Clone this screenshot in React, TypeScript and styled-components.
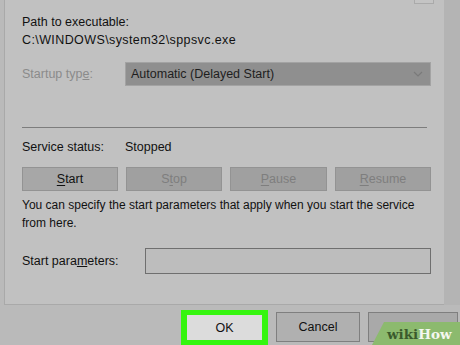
import React from "react";
import styled, { createGlobalStyle } from "styled-components";

const GlobalStyle = createGlobalStyle`
    html, body {
        margin: 0;
        padding: 0;
        background: #bcbcbc;
    }
    body {
        font-family: "Liberation Sans", Arial, sans-serif;
        font-size: 12.5px;
        color: #111;
    }
`;

const Page = styled.div`
    position: relative;
    width: 460px;
    height: 345px;
    overflow: hidden;
    background: #bababa;
    display: flex;
    flex-direction: column;
`;

const Top = styled.div`
    display: flex;
    height: 305px;
    padding-left: 4px;
`;

const Panel = styled.div`
    width: 440px;
    box-sizing: border-box;
    background: #c1c1c1;
    border-left: 1px solid #a9a9a9;
    border-bottom: 1px solid #a9a9a9;
    padding: 13px 0 0 17px;
    position: relative;
`;

const Strip = styled.div`
    flex: 1;
    background: #b4b4b4;
`;

const Line = styled.div<{ $wide?: boolean }>`
    line-height: 18px;
    white-space: nowrap;
    letter-spacing: ${(p) => (p.$wide ? "0.4px" : "0")};
`;

const Row = styled.div<{ $top: number }>`
    display: flex;
    align-items: center;
    margin-top: ${(p) => p.$top}px;
`;

const Label = styled.div<{ $width: number; $muted?: boolean }>`
    width: ${(p) => p.$width}px;
    color: ${(p) => (p.$muted ? "#8b8b8b" : "#111")};
    white-space: nowrap;
`;

const Combo = styled.div`
    width: 306px;
    height: 24px;
    box-sizing: border-box;
    background: #8f8f8f;
    border: 1px solid #a3a3a3;
    display: flex;
    align-items: center;
    justify-content: space-between;
    padding: 0 7px 0 5px;
    color: #1e1e1e;
`;

const Rule = styled.div`
    width: 405px;
    height: 1px;
    background: #7d7d7d;
    margin-top: 41px;
`;

const Buttons = styled.div`
    display: flex;
    gap: 8px;
    margin-top: 13px;
`;

const Btn = styled.div<{ $disabled?: boolean; $w: number }>`
    width: ${(p) => p.$w}px;
    height: 24px;
    box-sizing: border-box;
    background: ${(p) => (p.$disabled ? "#a0a0a0" : "#a7a7a7")};
    border: 1px solid #939393;
    display: flex;
    align-items: center;
    justify-content: center;
    color: ${(p) => (p.$disabled ? "#7e7e7e" : "#111")};
    u {
        text-decoration-thickness: 1px;
        text-underline-offset: 2px;
    }
`;

const Para = styled.div`
    margin-top: 5px;
    line-height: 18px;
    font-size: 12px;
    white-space: nowrap;
`;

const Input = styled.div`
    width: 286px;
    height: 26px;
    box-sizing: border-box;
    border: 1px solid #6f6f6f;
    background: #bdbdbd;
`;

const Stub = styled.div`
    position: absolute;
    top: -20px;
    right: 10px;
    width: 18px;
    height: 22px;
    border: 1px solid #aaa;
    background: #c4c4c4;
`;

const Footer = styled.div`
    flex: 1;
    display: flex;
    align-items: center;
    padding-left: 181px;
    gap: 8px;
`;

const Highlight = styled.div`
    width: 87px;
    height: 35px;
    box-sizing: border-box;
    background: #35f50f;
    padding: 5px 6px;
    margin-top: 5px;
`;

const OkBtn = styled.div`
    height: 100%;
    background: #dcdcdc;
    display: flex;
    align-items: center;
    justify-content: center;
    color: #111;
`;

const FootBtn = styled.div<{ $w: number; $disabled?: boolean }>`
    width: ${(p) => p.$w}px;
    height: 30px;
    margin-top: 3px;
    box-sizing: border-box;
    border: 1px solid #7f7f7f;
    background: ${(p) => (p.$disabled ? "#a9a9a9" : "#b0b0b0")};
    display: flex;
    align-items: center;
    justify-content: center;
    color: ${(p) => (p.$disabled ? "#8a8a8a" : "#111")};
    flex-shrink: 0;
`;

const Logo = styled.div`
    position: absolute;
    left: 372px;
    bottom: 0;
    width: 100px;
    height: 23px;
    background: #8cba6e;
    clip-path: polygon(12px 0, 100% 0, 100% 100%, 0 100%);
    display: flex;
    align-items: center;
    padding-left: 15px;
    box-sizing: border-box;
    font-family: "DejaVu Serif", "Liberation Serif", serif;
    font-weight: bold;
    font-size: 13.5px;
    white-space: nowrap;
    span:first-child {
        color: #3b5a2c;
    }
    span:last-child {
        color: #f4f7f0;
    }
`;

const Chevron = () => (
    <svg width="10" height="6" viewBox="0 0 10 6">
        <path d="M1 1 L5 5 L9 1" fill="none" stroke="#7a7a7a" strokeWidth="1.2" />
    </svg>
);

export default function App() {
    return (
        <>
            <GlobalStyle />
            <Page>
                <Top>
                    <Panel>
                        <Stub />
                        <Line>Path to executable:</Line>
                        <Line $wide>C:\WINDOWS\system32\sppsvc.exe</Line>
                        <Row $top={13}>
                            <Label $width={103} $muted>
                                Startup typ<u>e</u>:
                            </Label>
                            <Combo>
                                <span>Automatic (Delayed Start)</span>
                                <Chevron />
                            </Combo>
                        </Row>
                        <Rule />
                        <Row $top={12}>
                            <Label $width={103}>Service status:</Label>
                            <span>Stopped</span>
                        </Row>
                        <Buttons>
                            <Btn $w={96}>
                                <span><u>S</u>tart</span>
                            </Btn>
                            <Btn $w={96} $disabled>
                                <span>S<u>t</u>op</span>
                            </Btn>
                            <Btn $w={97} $disabled>
                                <span><u>P</u>ause</span>
                            </Btn>
                            <Btn $w={96} $disabled>
                                <span><u>R</u>esume</span>
                            </Btn>
                        </Buttons>
                        <Para>
                            You can specify the start parameters that apply when you start the service
                            <br />
                            from here.
                        </Para>
                        <Row $top={16}>
                            <Label $width={123}>
                                Start para<u>m</u>eters:
                            </Label>
                            <Input />
                        </Row>
                    </Panel>
                    <Strip />
                </Top>
                <Footer>
                    <Highlight>
                        <OkBtn>OK</OkBtn>
                    </Highlight>
                    <FootBtn $w={84}>Cancel</FootBtn>
                    <FootBtn $w={90} $disabled />
                </Footer>
                <Logo>
                    <span>wiki</span>
                    <span>How</span>
                </Logo>
            </Page>
        </>
    );
}
